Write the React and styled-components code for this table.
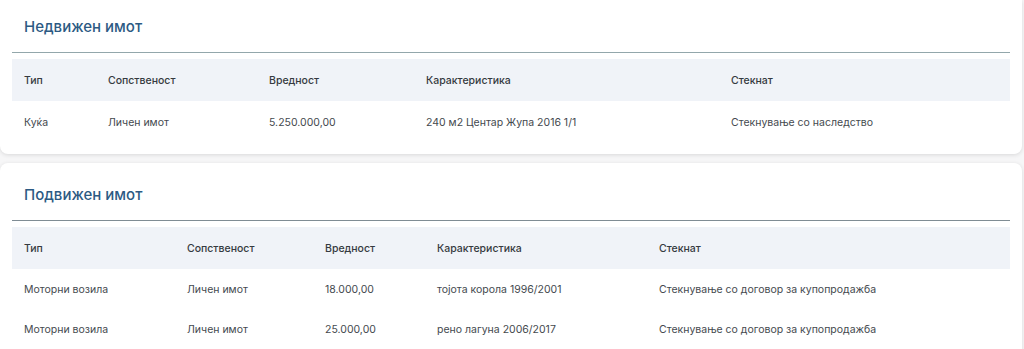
import React from "react";
import styled, { createGlobalStyle } from "styled-components";

const GlobalStyle = createGlobalStyle`
  html, body {
    margin: 0;
    padding: 0;
    background: #f6f6f7;
    font-family: Inter, "Noto Sans", sans-serif;
  }
`;

const realEstate = {
  title: "Недвижен имот",
  cols: [84, 161, 157, 305, 291],
  rowHeight: 42,
  rows: [["Куќа", "Личен имот", "5.250.000,00", "240 м2 Центар Жупа 2016 1/1", "Стекнување со наследство"]],
};

const movable = {
  title: "Подвижен имот",
  cols: [163, 138, 112, 222, 363],
  rowHeight: 40,
  rows: [
    ["Моторни возила", "Личен имот", "18.000,00", "тојота корола 1996/2001", "Стекнување со договор за купопродажба"],
    ["Моторни возила", "Личен имот", "25.000,00", "рено лагуна 2006/2017", "Стекнување со договор за купопродажба"],
  ],
  line: "#7f8c94",
};

const headers = ["Тип", "Сопственост", "Вредност", "Карактеристика", "Стекнат"];

const Page = styled.div`
  display: flex;
  flex-direction: column;
  gap: 9px;
  width: 1022px;
`;

const Card = styled.section`
  background: #fff;
  border-radius: ${(p) => (p.first ? "0 0 8px 8px" : "8px")};
  box-shadow: 0 1px 4px rgba(0, 0, 0, 0.12);
  padding: ${(p) => (p.first ? "16px" : "21px")} 12px 11px;
`;

const Title = styled.h2`
  margin: 0;
  padding: 0 12px 14px;
  font-size: 15px;
  line-height: 22px;
  font-weight: 500;
  color: #2c5a83;
  border-bottom: 1.5px solid ${(p) => p.line};
`;

const Table = styled.table`
  width: 998px;
  margin-top: 6px;
  border-collapse: collapse;
  table-layout: fixed;
  font-size: 10.5px;
`;

const HeadRow = styled.tr`
  background: #f0f3f8;
`;

const Th = styled.th`
  height: 42px;
  padding: 0 12px;
  text-align: left;
  font-weight: 500;
  color: #353a40;
`;

const Td = styled.td`
  height: ${(p) => p.h}px;
  padding: 0 12px;
  color: #44494e;
  white-space: nowrap;
`;

const Section = ({ data, first }) => (
  <Card first={first}>
    <Title line={data.line || "#93a7ab"}>{data.title}</Title>
    <Table>
      <colgroup>
        {data.cols.map((w, i) => (
          <col key={i} style={{ width: w }} />
        ))}
      </colgroup>
      <thead>
        <HeadRow>
          {headers.map((h) => (
            <Th key={h}>{h}</Th>
          ))}
        </HeadRow>
      </thead>
      <tbody>
        {data.rows.map((r, i) => (
          <tr key={i}>
            {r.map((c, j) => (
              <Td key={j} h={data.rowHeight}>
                {c}
              </Td>
            ))}
          </tr>
        ))}
      </tbody>
    </Table>
  </Card>
);

export default function App() {
  return (
    <>
      <GlobalStyle />
      <Page>
        <Section data={realEstate} first />
        <Section data={movable} />
      </Page>
    </>
  );
}
